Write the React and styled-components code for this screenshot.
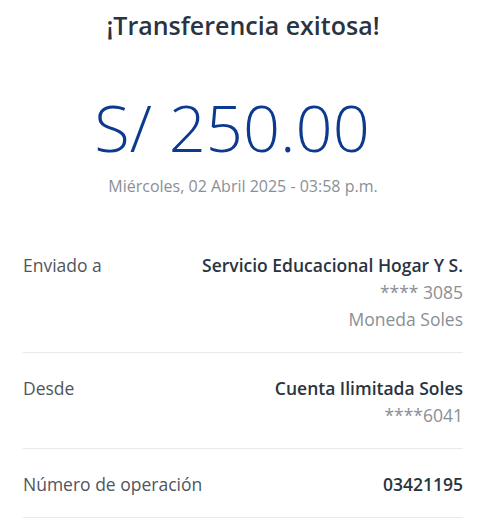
import React from 'react';
import styled, { createGlobalStyle } from 'styled-components';

const GlobalStyle = createGlobalStyle`
  body {
    margin: 0;
    background: #ffffff;
    font-family: "Open Sans", "Noto Sans", sans-serif;
  }
`;

const Page = styled.div`
  display: flex;
  flex-direction: column;
  padding: 10px 20px 0 23px;
`;

const Title = styled.h1`
  margin: 0;
  text-align: center;
  font-size: 25px;
  line-height: 30px;
  font-weight: 600;
  color: #2a3441;
`;

const Amount = styled.div`
  margin-top: 48px;
  padding-right: 22px;
  text-align: center;
  font-size: 65px;
  line-height: 78px;
  font-weight: 300;
  color: #0d3a8e;
`;

const DateText = styled.div`
  margin-top: 10px;
  text-align: center;
  font-size: 16px;
  line-height: 20px;
  color: #8a8f96;
`;

const Details = styled.div`
  margin-top: 34px;
`;

const Row = styled.div`
  display: flex;
  justify-content: space-between;
  align-items: flex-start;
  padding: 22px 0 19px;
  border-bottom: 1px solid #e8e9eb;
  font-size: 17.5px;
  line-height: 27px;
`;

const Label = styled.div`
  color: #4f555d;
`;

const Values = styled.div`
  display: flex;
  flex-direction: column;
  align-items: flex-end;
  text-align: right;
`;

const Value = styled.div`
  color: ${props => (props.main ? '#2a3441' : '#8a8f96')};
  font-weight: ${props => (props.main ? 600 : 400)};
`;

const rows = [
  { label: 'Enviado a', values: ['Servicio Educacional Hogar Y S.', '**** 3085', 'Moneda Soles'] },
  { label: 'Desde', values: ['Cuenta Ilimitada Soles', '****6041'] },
  { label: 'Número de operación', values: ['03421195'] },
];

export default function App() {
  return (
    <>
      <GlobalStyle />
      <Page>
        <Title>¡Transferencia exitosa!</Title>
        <Amount>S/ 250.00</Amount>
        <DateText>Miércoles, 02 Abril 2025 - 03:58 p.m.</DateText>
        <Details>
          {rows.map(row => (
            <Row key={row.label}>
              <Label>{row.label}</Label>
              <Values>
                {row.values.map((v, i) => (
                  <Value key={v} main={i === 0}>
                    {v}
                  </Value>
                ))}
              </Values>
            </Row>
          ))}
        </Details>
      </Page>
    </>
  );
}
